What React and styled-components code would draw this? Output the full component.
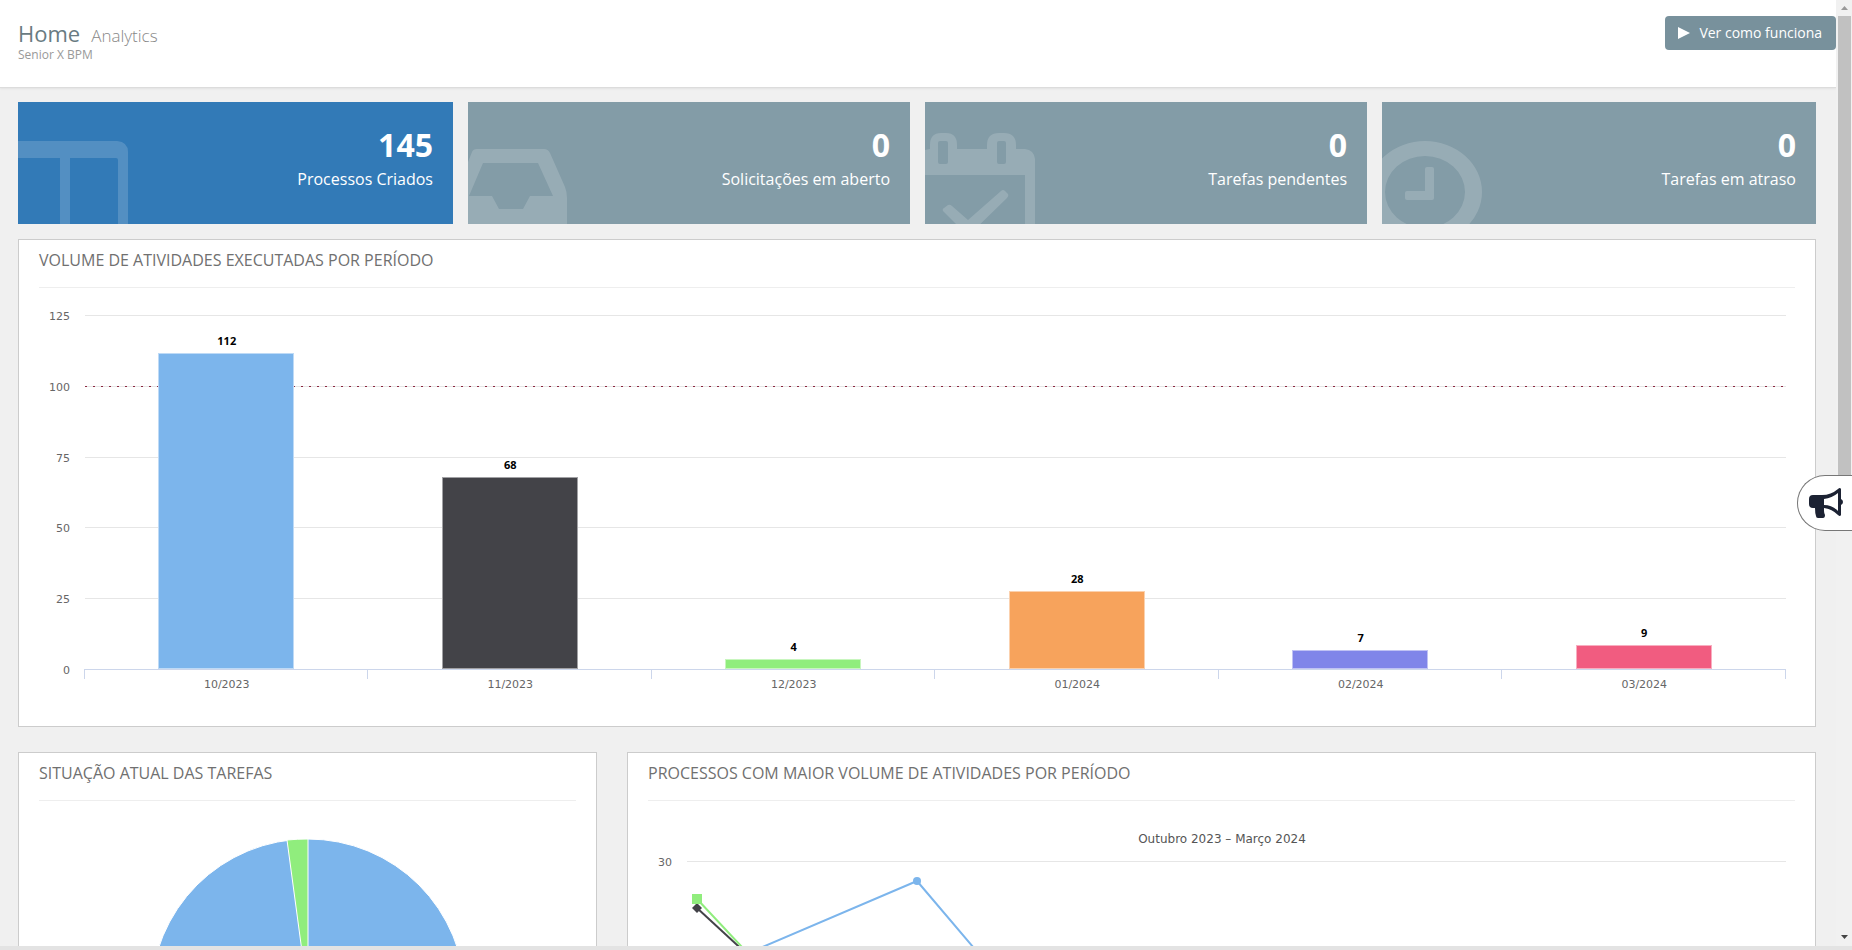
import React from 'react';
import styled, { createGlobalStyle } from 'styled-components';

const GlobalStyle = createGlobalStyle`
  body {
    margin: 0;
    background: #f0f0f0;
    font-family: "Open Sans", "Noto Sans", sans-serif;
    color: #666;
  }

  * {
    box-sizing: border-box;
  }
`;

const Frame = styled.div`
  position: relative;
  display: flex;
  flex-direction: column;
  height: 100vh;
  overflow: hidden;
`;

const Viewport = styled.div`
  flex: 1;
  display: flex;
  min-height: 0;
`;

const Page = styled.main`
  flex: 1;
  min-width: 0;
  overflow: hidden;
`;

const StatusStrip = styled.div`
  height: 4px;
  background: #e3e3e3;
`;

const Header = styled.header`
  display: flex;
  justify-content: space-between;
  align-items: flex-start;
  padding: 16px 0 24px 18px;
  background: #fff;
  border-bottom: 1px solid #dcdcdc;
  box-shadow: 0 1px 2px rgba(0, 0, 0, 0.06);
`;

const Heading = styled.div`
  padding-top: 3px;
`;

const Title = styled.h1`
  display: flex;
  align-items: baseline;
  gap: 11px;
  margin: 0;
  font-size: 22px;
  line-height: 28px;
  font-weight: 400;
  color: #697b82;
`;

const TitleDetail = styled.small`
  font-size: 17px;
  line-height: 16px;
  font-weight: 300;
  color: #888;
`;

const Subtitle = styled.div`
  font-size: 12px;
  line-height: 16px;
  color: #999;
`;

const HelpButton = styled.button`
  display: flex;
  align-items: center;
  gap: 9px;
  height: 34px;
  padding: 0 14px 0 13px;
  border: 0;
  border-radius: 4px;
  background: #78919c;
  color: #fff;
  font-family: inherit;
  font-size: 14px;
  line-height: 20px;
  cursor: pointer;

  &:hover {
    background: #6a838e;
  }
`;

const Body = styled.div`
  display: flex;
  flex-direction: column;
  padding: 14px 20px 25px 18px;
`;

const Cards = styled.div`
  display: grid;
  grid-template-columns: 435fr 442fr 442fr 434fr;
  gap: 15px;
  margin-bottom: 15px;
`;

const Card = styled.a`
  position: relative;
  display: block;
  padding: 25px 20px 33px;
  overflow: hidden;
  background: ${props => props.$color};
  color: #fff;
  text-align: right;
  text-decoration: none;
`;

const CardIcon = styled.svg`
  position: absolute;
  left: 0;
  top: 0;
  fill: #fff;
  opacity: 0.16;
`;

const CardValue = styled.div`
  font-size: 32px;
  line-height: 36px;
  font-weight: 700;
`;

const CardLabel = styled.div`
  margin-top: 4px;
  font-size: 16px;
  line-height: 24px;
`;

const Panel = styled.section`
  padding: 8px 20px 0;
  background: #fff;
  border: 1px solid #ccc;
`;

const PanelTitle = styled.h2`
  margin: 0;
  padding-bottom: 15px;
  border-bottom: 1px solid #eee;
  font-size: 16px;
  line-height: 24px;
  font-weight: 400;
  text-transform: uppercase;
  color: #707070;
`;

const Panels = styled.div`
  display: grid;
  grid-template-columns: 579fr 1189fr;
  gap: 30px;
  margin-top: 25px;
`;

const Chart = styled.svg`
  display: block;
  width: 100%;
  height: auto;
  overflow: hidden;
`;

const AxisText = styled.text`
  font-family: "DejaVu Sans", sans-serif;
  font-size: 11px;
  fill: #666;
`;

const ChartTitle = styled.text`
  font-family: "DejaVu Sans", sans-serif;
  font-size: 12px;
  fill: #555;
`;

const ValueText = styled.text`
  font-size: 11px;
  font-weight: 700;
  fill: #000;
`;

const Scrollbar = styled.div`
  display: flex;
  flex-direction: column;
  align-items: center;
  width: 16px;
  padding: 0 1px 0 2px;
  background: #f1f1f1;
`;

const ScrollArrow = styled.svg`
  display: block;
  width: 13px;
  height: 16px;
  fill: ${props => (props.$active ? '#444' : '#999')};
`;

const ScrollTrack = styled.div`
  flex: 1;
  width: 100%;
`;

const ScrollThumb = styled.div`
  height: 54%;
  background: #c1c1c1;
`;

const FeedbackButton = styled.button`
  position: absolute;
  right: 0;
  top: 50%;
  display: flex;
  align-items: center;
  width: 55px;
  height: 56px;
  padding: 0 0 0 11px;
  border: 1px solid #777;
  border-right: 0;
  border-radius: 28px 0 0 28px;
  background: #fff;
  color: #1c2233;
  cursor: pointer;
`;

const bars = [
  { label: '10/2023', value: 112, color: '#7cb5ec' },
  { label: '11/2023', value: 68, color: '#434348' },
  { label: '12/2023', value: 4, color: '#90ed7d' },
  { label: '01/2024', value: 28, color: '#f7a35c' },
  { label: '02/2024', value: 7, color: '#8085e9' },
  { label: '03/2024', value: 9, color: '#f15c80' }
];

const ColumnsIcon = () => (
  <CardIcon width="112" height="122" aria-hidden="true">
    <path fillRule="evenodd" d="M0 39H99Q110 40 110 50V122H0ZM0 56V122H42V56ZM52 56V122H100V58Q100 56 98 56Z" />
  </CardIcon>
);

const InboxIcon = () => (
  <CardIcon width="112" height="122" aria-hidden="true">
    <path fillRule="evenodd" d="M0 60L4 50Q5 47 9 47H76Q80 47 82 51L97 85Q99 90 99 96V122H0ZM15 61L1 94H24L31 107H55L62 94H85L70 61Z" />
  </CardIcon>
);

const CalendarIcon = () => (
  <CardIcon width="112" height="122" aria-hidden="true">
    <path fillRule="evenodd" d="M0 48L5 47V43Q5 31 16 31H21Q32 31 32 43V47H62V43Q62 31 74 31H79Q91 31 91 43V47H100Q109 48 110 57V122H100V73H0ZM15 39Q13 39 13 41V60Q13 62 15 62H21Q23 62 23 60V41Q23 39 21 39ZM74 39Q72 39 72 41V60Q72 62 74 62H79Q81 62 81 60V41Q81 39 79 39Z" />
    <path d="M18 109Q17 107 19 106L23 103Q25 102 27 104L43 118L76 89Q78 87 80 89L83 92Q84 94 82 96L43 134Z" />
  </CardIcon>
);

const ClockIcon = () => (
  <CardIcon width="112" height="122" aria-hidden="true">
    <path fillRule="evenodd" d="M-14 90A57 51 0 0 1 100 90A57 51 0 0 1 -14 90ZM3 90A40 36 0 0 0 83 90A40 36 0 0 0 3 90Z" />
    <path d="M43 67Q43 65 45 65H50Q52 65 52 67V96Q52 98 50 98H25Q23 98 23 96V91Q23 89 25 89H43Z" />
  </CardIcon>
);

const MegaphoneIcon = () => (
  <svg width="34" height="30" fill="currentColor" aria-hidden="true">
    <path
      fillRule="evenodd"
      d="M4 7H13Q22 7 29 1Q31 -1 32 1V11Q34 12 34 14Q34 16 32 17V27Q31 29 29 27Q23 21 15 20V23Q15 25 16 27Q16 30 14 30H9Q7 30 7 28Q6 25 6 20H4Q0 20 0 16V11Q0 7 4 7ZM15 11V17Q23 17 29 23V5Q23 10 15 11Z"
    />
  </svg>
);

const cards = [
  { value: 145, label: 'Processos Criados', color: '#327ab7', icon: <ColumnsIcon /> },
  { value: 0, label: 'Solicitações em aberto', color: '#839ca7', icon: <InboxIcon /> },
  { value: 0, label: 'Tarefas pendentes', color: '#839ca7', icon: <CalendarIcon /> },
  { value: 0, label: 'Tarefas em atraso', color: '#839ca7', icon: <ClockIcon /> }
];

class VolumeChart extends React.Component {
  createGridLine(tick) {
    const y = Math.round(381 - (tick / 125) * 354) + 0.5;

    return (
      <g key={tick}>
        {tick > 0 && <line x1="46" x2="1747" y1={y} y2={y} stroke="#e6e6e6" />}
        <AxisText x="31" y={y + 4} textAnchor="end">{tick}</AxisText>
      </g>
    );
  }

  createBar(bar, index) {
    const step = 1701 / 6;
    const center = 46 + step * (index + 0.5);
    const left = Math.floor(center - 68);
    const height = Math.round((bar.value / 125) * 354) - 1;
    const top = 381 - height;

    return (
      <g key={bar.label}>
        <rect x={left} y={top} width="136" height={height} fill={bar.color} />
        <rect x={left + 0.5} y={top + 0.5} width="135" height={height - 1} fill="none" stroke="#fff" strokeOpacity="0.5" />
        <ValueText x={center} y={top - 8} textAnchor="middle">{bar.value}</ValueText>
        <AxisText x={center} y="400" textAnchor="middle">{bar.label}</AxisText>
      </g>
    );
  }

  render() {
    const ticks = [0, 25, 50, 75, 100, 125];

    return (
      <Chart viewBox="0 0 1756 438" role="img" aria-label="Volume de atividades executadas por período">
        {ticks.map((tick) => this.createGridLine(tick))}
        <line x1="46" x2="1747" y1="98.5" y2="98.5" stroke="#8b2840" strokeDasharray="2 6" />
        {bars.map((bar, index) => this.createBar(bar, index))}
        <path d="M46 381.5H1747" stroke="#ccd6eb" />
        {[0, 1, 2, 3, 4, 5, 6].map((i) => {
          const x = Math.floor(45 + i * 283.5) + 0.5;
          return <path key={i} d={`M${x} 381V391`} stroke="#ccd6eb" />;
        })}
      </Chart>
    );
  }
}

// the pie and the line chart run on below the fold
const StatusChart = () => (
  <Chart viewBox="0 0 537 400" role="img" aria-label="Situação atual das tarefas">
    <g stroke="#fff">
      <circle cx="269" cy="195" r="157" fill="#7cb5ec" />
      <path d="M269 195L248 39Q258 38 269 38Z" fill="#90ed7d" />
    </g>
  </Chart>
);

const ProcessChart = () => (
  <Chart viewBox="0 0 1147 400" role="img" aria-label="Processos com maior volume de atividades por período">
    <ChartTitle x="574" y="42" textAnchor="middle">Outubro 2023 – Março 2024</ChartTitle>
    <AxisText x="24" y="65" textAnchor="end">30</AxisText>
    <path d="M39 60.5H1138" stroke="#e6e6e6" />
    <g fill="none" strokeWidth="2" strokeLinejoin="round">
      <path d="M49 174L269 80L489 339" stroke="#7cb5ec" />
      <path d="M49 107L269 310" stroke="#434348" />
      <path d="M49 98L269 333" stroke="#90ed7d" />
    </g>
    <circle cx="269" cy="80" r="4" fill="#7cb5ec" />
    <path d="M49 102L54 107L49 112L44 107Z" fill="#434348" />
    <rect x="44" y="93" width="10" height="10" fill="#90ed7d" />
  </Chart>
);

class App extends React.Component {
  createCard(card) {
    return (
      <Card key={card.label} href="#" $color={card.color}>
        {card.icon}
        <CardValue>{card.value}</CardValue>
        <CardLabel>{card.label}</CardLabel>
      </Card>
    );
  }

  render() {
    return (
      <Frame>
        <GlobalStyle />
        <Viewport>
          <Page>
            <Header>
              <Heading>
                <Title>Home <TitleDetail>Analytics</TitleDetail></Title>
                <Subtitle>Senior X BPM</Subtitle>
              </Heading>
              <HelpButton type="button">
                <svg width="12" height="12" fill="currentColor" aria-hidden="true">
                  <path d="M0 0L12 6L0 12Z" />
                </svg>
                Ver como funciona
              </HelpButton>
            </Header>

            <Body>
              <Cards>
                {cards.map((card) => this.createCard(card))}
              </Cards>

              <Panel>
                <PanelTitle>Volume de atividades executadas por período</PanelTitle>
                <VolumeChart />
              </Panel>

              <Panels>
                <Panel>
                  <PanelTitle>Situação atual das tarefas</PanelTitle>
                  <StatusChart />
                </Panel>
                <Panel>
                  <PanelTitle>Processos com maior volume de atividades por período</PanelTitle>
                  <ProcessChart />
                </Panel>
              </Panels>
            </Body>
          </Page>

          <Scrollbar aria-hidden="true">
            <ScrollArrow viewBox="0 0 13 16"><path d="M3 10L6.5 6L10 10Z" /></ScrollArrow>
            <ScrollTrack><ScrollThumb /></ScrollTrack>
            <ScrollArrow viewBox="0 0 13 16" $active><path d="M3 5L6.5 9L10 5Z" /></ScrollArrow>
          </Scrollbar>
        </Viewport>
        <StatusStrip />
        <FeedbackButton type="button" aria-label="Novidades">
          <MegaphoneIcon />
        </FeedbackButton>
      </Frame>
    );
  }
}

export default App;
